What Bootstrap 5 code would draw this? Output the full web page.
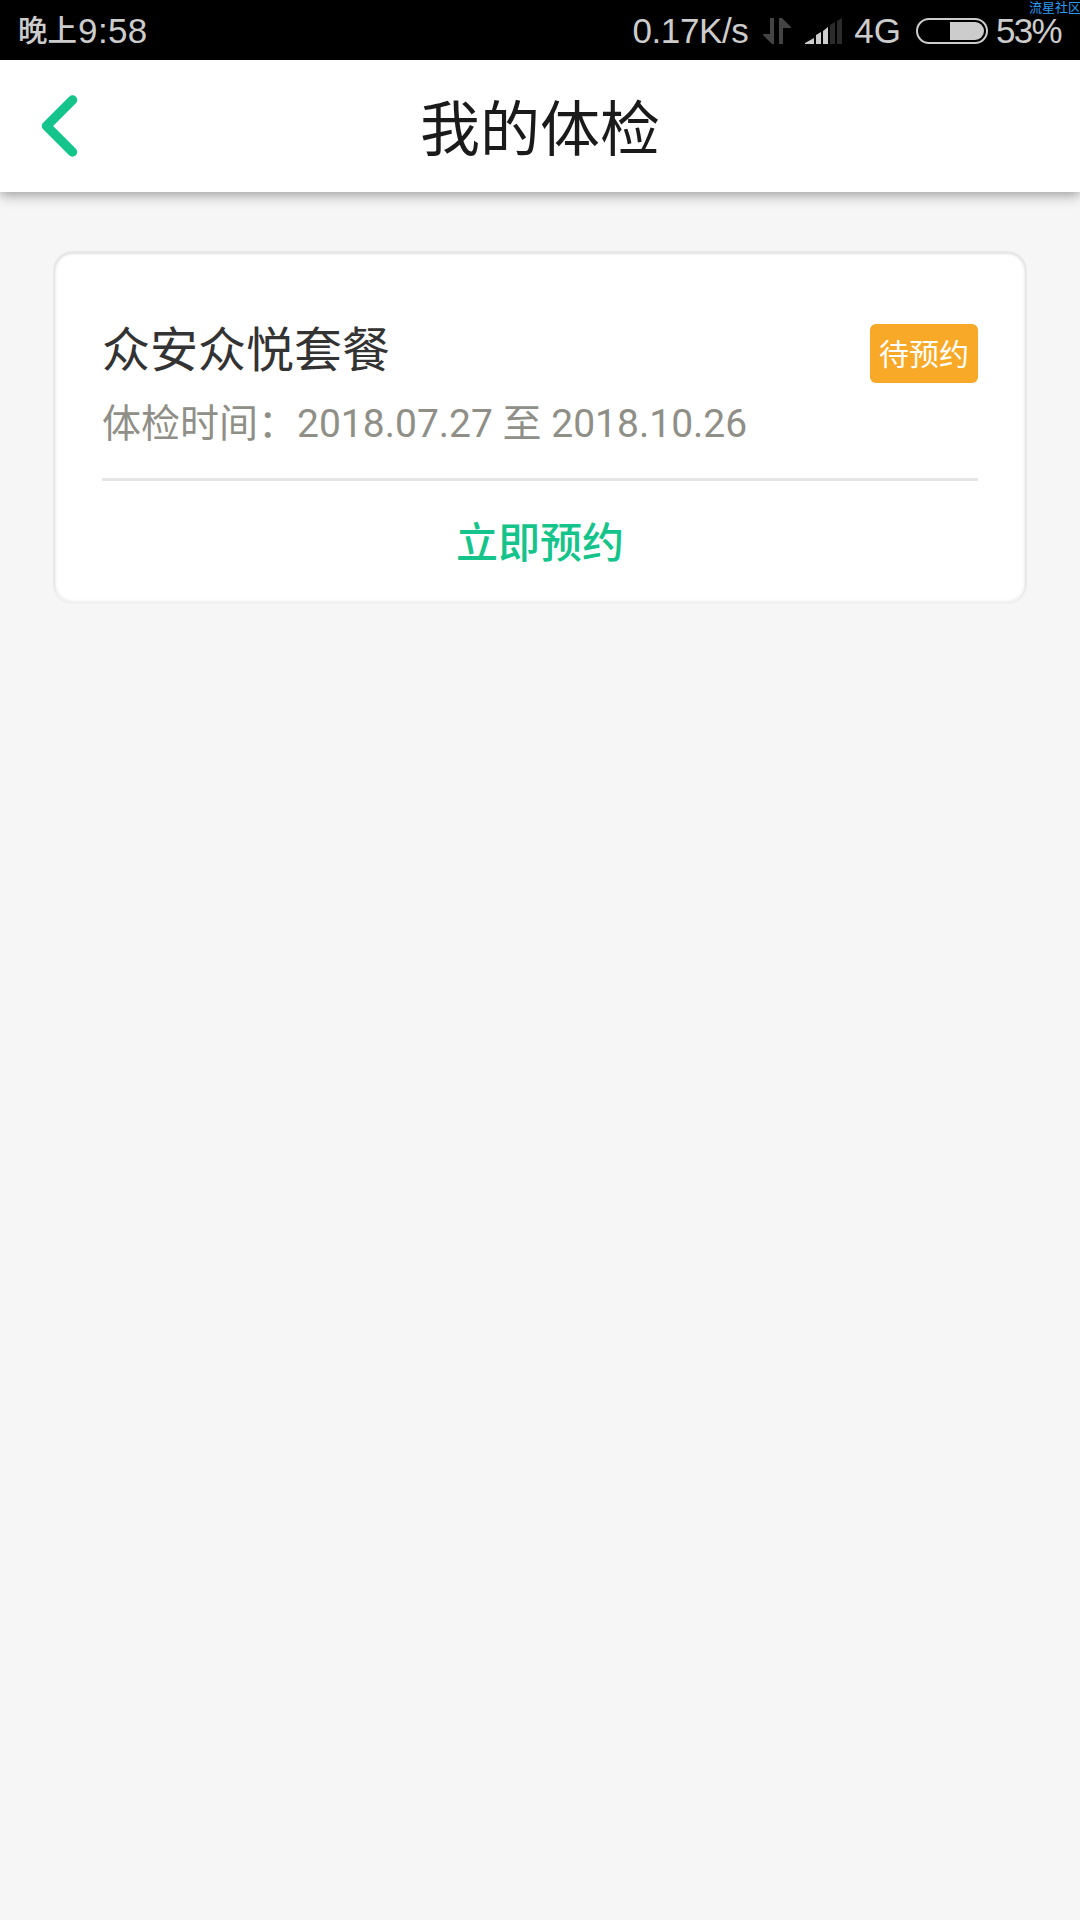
<!DOCTYPE html>
<html lang="zh-CN">
<head>
<meta charset="utf-8">
<meta name="viewport" content="width=device-width, initial-scale=1">
<title>我的体检</title>
<link href="https://cdn.jsdelivr.net/npm/bootstrap@5.3.0/dist/css/bootstrap.min.css" rel="stylesheet">
<style>
body{background:#f6f6f6;font-family:Roboto,"Noto Sans CJK SC",sans-serif;min-height:1920px;overflow-x:hidden}
.status-bar{height:60px;background:#000;color:#ccc;font:35px/34px "Liberation Sans","Noto Sans CJK SC",sans-serif;padding:1px 19px 0 18px;white-space:nowrap}
.status-bar .cjk{font-size:29.5px;font-weight:500}
.status-bar svg,.title-bar svg{display:block;flex:none}
.clock{letter-spacing:.4px;margin-left:1px}
.speed{margin-right:15px;letter-spacing:-.4px}
.arrows{margin-right:13px}
.signal{margin-right:11px}
.network{margin-right:15px}
.battery{margin-right:8px}
.percent{letter-spacing:-1.7px}
.watermark{top:0;right:-1px;font:13px/13px "Noto Sans CJK SC",sans-serif;color:#2b9cf2}
.title-bar{height:132px;background:#fff;box-shadow:0 3px 12px rgba(0,0,0,.38);padding:0 40px}
.title-bar h1{font-size:60px;line-height:122px;color:#1a1a1a;font-weight:400;padding-top:10px}
.side{width:40px}
.exam-card{margin:59px 53px 0;height:353px;border:0;border-radius:20px;background:#fff;padding:0 49px;box-shadow:inset 0 -2px 1px #f1f1f1,inset 0 1px 1px 2px #e8e8e8,inset 0 0 3px 3px #eee}
.exam-head{height:227px;padding-top:61px}
.pkg{font-size:48px;line-height:72px;color:#333;padding-top:3px}
.period{font-size:39px;line-height:58px;color:#8f8f88;padding-top:8px}
.state{width:108px;height:59px;margin-top:12px;border-radius:6px;background:#f9a928;color:#fff;font-size:30px;line-height:62px;font-weight:400;padding:0}
.rule{height:3px;background:#e5e5e5}
.book{font-size:42px;line-height:60px;font-weight:500;color:#14c48a;padding:33px 0 0;border:0}
</style>
<script src="https://cdn.jsdelivr.net/npm/bootstrap@5.3.0/dist/js/bootstrap.bundle.min.js"></script>
</head>
<body>
<div class="status-bar position-relative d-flex align-items-center justify-content-between">
  <div class="d-flex"><span class="cjk">晚上</span><span class="clock">9:58</span></div>
  <div class="d-flex align-items-center">
    <span class="speed">0.17K/s</span>
    <svg class="arrows" width="29" height="26" viewBox="0 0 29 26" fill="#444"><path d="M7 0h4v26H9L0 17v-1h7zM16 26h4V10h8V9L19 0h-3z"/></svg>
    <svg class="signal" width="38" height="26" viewBox="0 0 38 26"><path fill="#ccc" d="M0 26v-1l9-5v6zM11 26V17l5-3v12zM18 26V13l5-4v17z"/><path fill="#2b2b2b" d="M25 26V7l5-3v22zM32 26V3l5-3v26z"/></svg>
    <span class="network">4G</span>
    <svg class="battery" width="72" height="26" viewBox="0 0 72 26"><rect x="1" y="1" width="70" height="24" rx="12" fill="none" stroke="#ccc" stroke-width="2"/><path fill="#ccc" d="M34 4h25a9 9 0 0 1 0 18H34z"/></svg>
    <span class="percent">53%</span>
  </div>
  <span class="watermark position-absolute">流星社区</span>
</div>
<header class="title-bar d-flex align-items-center justify-content-between">
  <div class="side"><svg width="40" height="64" viewBox="0 0 40 64"><path d="M32.5 6 6.5 32l26 26" fill="none" stroke="#14c48a" stroke-width="9.5" stroke-linecap="round" stroke-linejoin="round"/></svg></div>
  <h1 class="m-0">我的体检</h1>
  <div class="side"></div>
</header>
<main class="card exam-card">
  <div class="exam-head">
    <div class="d-flex justify-content-between align-items-start">
      <div class="pkg">众安众悦套餐</div>
      <span class="badge state">待预约</span>
    </div>
    <div class="period">体检时间：2018.07.27 至 2018.10.26</div>
  </div>
  <div class="rule"></div>
  <a class="btn book" role="button">立即预约</a>
</main>
</body>
</html>
